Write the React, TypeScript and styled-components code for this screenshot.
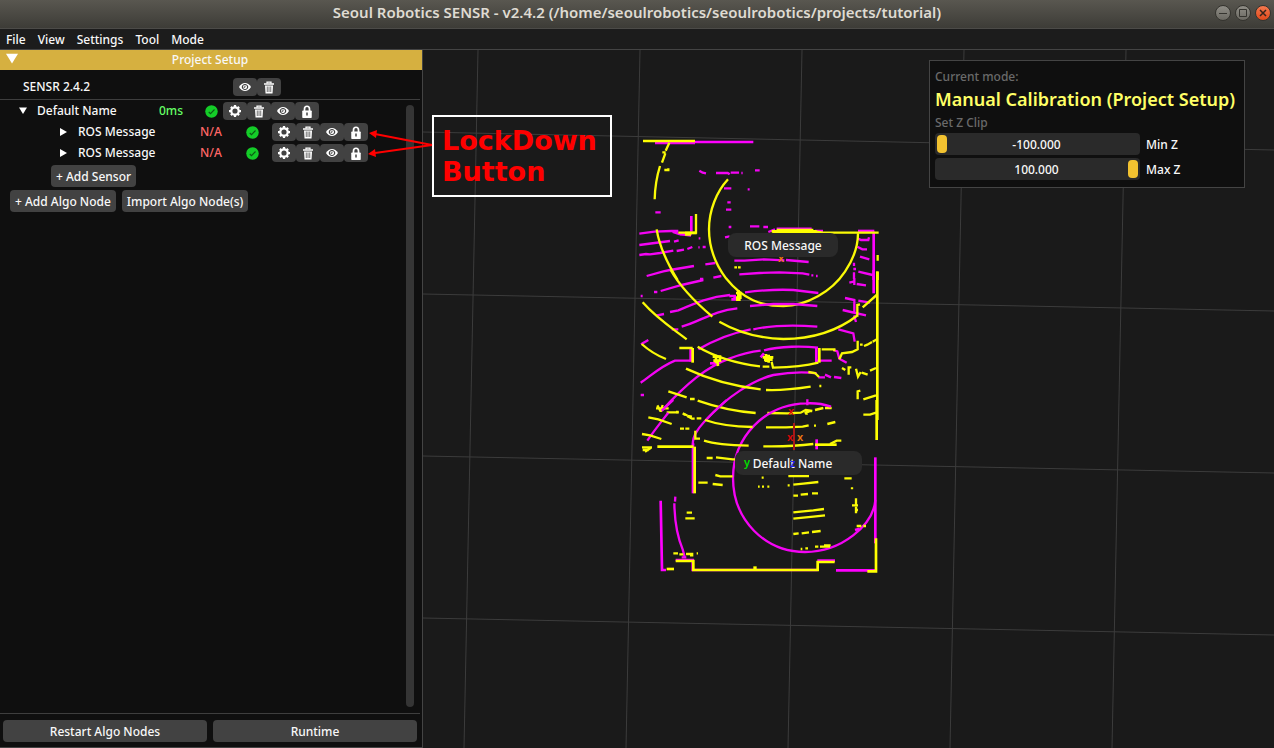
import React from "react";
import styled, { createGlobalStyle } from "styled-components";

const GlobalStyle = createGlobalStyle`
  *, *::before, *::after { box-sizing: border-box; }
  body {
    margin: 0;
    background: #1a1a1a;
    color: #f8f8f8;
    font: 460 12px/20px "Noto Sans", sans-serif;
  }
  button, input { font: inherit; color: inherit; }
`;

const Page = styled.div`
  display: flex;
  flex-direction: column;
  min-height: 100vh;
`;

const TitleBar = styled.header`
  display: grid;
  grid-template-columns: 80px 1fr 80px;
  align-items: center;
  height: 29px;
  padding-bottom: 2px;
  background: linear-gradient(#595750, #3d3c37);
  border-bottom: 1px solid #4c4b48;
`;

const WindowTitle = styled.h1`
  grid-column: 2;
  margin: 0;
  padding-bottom: 2px;
  text-align: center;
  white-space: nowrap;
  color: #dfdbd2;
  font: 600 15px/20px "Noto Sans", sans-serif;
`;

const WindowControls = styled.div`
  display: flex;
  justify-content: flex-end;
  gap: 4px;
  padding-right: 3px;
`;

const WindowButton = styled.button<{ $close?: boolean }>`
  display: grid;
  place-items: center;
  width: 16px;
  height: 16px;
  padding: 0;
  border: 1px solid #35342f;
  border-radius: 50%;
  background: ${(p) => (p.$close ? "linear-gradient(#f4794f, #e0491b)" : "linear-gradient(#8f8d86, #6b6962)")};
  svg { display: block; }
`;

const MenuBar = styled.nav`
  display: flex;
  gap: 12px;
  height: 21px;
  padding: 1px 0 0 6px;
  background: #1c1c1c;
  border-bottom: 1px solid #444;
`;

const MenuItem = styled.button`
  padding: 0;
  border: 0;
  background: none;
  line-height: 20px;
`;

const Workspace = styled.main`
  display: flex;
  flex: 1;
`;

const SidePanel = styled.aside`
  display: flex;
  flex-direction: column;
  flex: 0 0 423px;
  background: #0f0f0f;
  border-right: 1px solid #444;
  border-bottom: 1px solid #444;
`;

const PanelHeader = styled.header`
  display: grid;
  grid-template-columns: 24px 1fr 26px;
  height: 20px;
  background: #d6b040;
`;

const PanelTitle = styled.h2`
  margin: 0;
  font: inherit;
  text-align: center;
`;

const ToggleButton = styled.button`
  display: flex;
  align-items: center;
  padding: 0;
  border: 0;
  background: none;
`;

const HeaderToggle = styled(ToggleButton)`
  padding: 0 0 2px 6px;
`;

const ProjectRow = styled.div`
  display: grid;
  grid-template-columns: 210px auto;
  justify-content: start;
  align-items: center;
  margin: 8px 2px 1px 0;
  padding: 0 0 2px 23px;
  line-height: 18px;
`;

const Divider = styled.hr`
  width: 420px;
  height: 1px;
  margin: 0;
  border: 0;
  background: #3e3e3e;
`;

const TreeArea = styled.div`
  display: flex;
  flex: 1;
  justify-content: space-between;
  padding: 2px 8px 6px 0;
`;

const Tree = styled.div`
  display: flex;
  flex-direction: column;
  align-items: flex-start;
  gap: 3px;
`;

const TreeRow = styled.div<{ $child?: boolean }>`
  display: grid;
  grid-template-columns: 18px 122px 46px ${(p) => (p.$child ? "26px" : "18px")} auto;
  align-items: center;
  height: 18px;
  padding-left: ${(p) => (p.$child ? 60 : 19)}px;
  line-height: 18px;
`;

const Timing = styled.span<{ $ok?: boolean }>`
  color: ${(p) => (p.$ok ? "#66ff66" : "#ff6666")};
`;

const IconGroup = styled.div`
  display: flex;
`;

const IconButton = styled.button`
  display: grid;
  place-items: center;
  width: 24px;
  height: 18px;
  padding: 0;
  border: 0;
  border-radius: 4px;
  background: #424242;
  svg { display: block; }
`;

const ActionButton = styled.button`
  height: 22px;
  padding: 1px 5px 0;
  border: 0;
  border-radius: 4px;
  background: #424242;
  white-space: nowrap;
`;

const SensorActions = styled.div`
  padding-left: 51px;
`;

const NodeActions = styled.div`
  display: flex;
  gap: 6px;
  padding-left: 10px;
`;

const ScrollTrack = styled.div`
  width: 8px;
  margin-top: 3px;
  border-radius: 4px;
  background: #353535;
`;

const PanelFooter = styled.footer`
  display: grid;
  grid-template-columns: 1fr 1fr;
  gap: 6px;
  padding: 6px 5px 5px 3px;
`;

const Viewport = styled.section`
  position: relative;
  flex: 1;
  min-width: 0;
  background: #1a1a1a;
`;

const SceneCanvas = styled.svg`
  position: absolute;
  inset: 0;
  width: 100%;
  height: 100%;
`;

const SceneTag = styled.div<{ $x: number; $y: number; $w: number }>`
  position: absolute;
  left: ${(p) => p.$x}px;
  top: ${(p) => p.$y}px;
  width: ${(p) => p.$w}px;
  height: 24px;
  border-radius: 8px;
  background: #2a2a2a;
  line-height: 25px;
  text-align: center;
`;

const TagText = styled.span<{ $shift?: number }>`
  padding-right: ${(p) => p.$shift ?? 0}px;
`;

const Callout = styled.div`
  position: absolute;
  left: 9px;
  top: 65px;
  width: 180px;
  height: 82px;
  padding: 8px;
  border: 2px solid #fff;
  color: #f00;
  font: 700 27px/31px "DejaVu Sans", sans-serif;
`;

const CalloutArrows = styled.svg`
  position: absolute;
  left: -56px;
  top: 76px;
  overflow: visible;
  pointer-events: none;
`;

const ModePanel = styled.section`
  position: absolute;
  top: 10px;
  right: 29px;
  width: 316px;
  padding: 6px 5px 7px;
  background: #0f0f0f;
  border: 1px solid #444;
`;

const Caption = styled.p`
  margin: 0;
  color: #6a6a6a;
  line-height: 20px;
`;

const ModeName = styled.h2`
  margin: 0;
  padding-bottom: 2px;
  color: #ffff66;
  font: 650 18px/24px "Noto Sans", sans-serif;
  white-space: nowrap;
`;

const SliderRow = styled.div`
  display: grid;
  grid-template-columns: 205px auto;
  gap: 6px;
  align-items: center;
  margin-bottom: 3px;
  line-height: 22px;
  &:last-child { margin-bottom: 0; }
`;

const SliderBox = styled.div`
  display: grid;
  height: 22px;
  border-radius: 4px;
  background: #2a2a2a;
`;

const SliderLabel = styled.label`
  padding-top: 1px;
  line-height: 21px;
`;

const RangeInput = styled.input`
  grid-area: 1 / 1;
  appearance: none;
  width: 100%;
  height: 22px;
  margin: 0;
  padding: 0 2px;
  background: transparent;
  &::-webkit-slider-thumb {
    appearance: none;
    width: 10px;
    height: 18px;
    border-radius: 4px;
    background: #f2c230;
  }
`;

const SliderValue = styled.output`
  grid-area: 1 / 1;
  padding: 1px 2px 0 0;
  line-height: 22px;
  text-align: center;
  pointer-events: none;
`;

const Triangle = ({ open, size = 8 }: { open?: boolean; size?: number }) => (
  <svg width={size} height={size} viewBox="0 0 8 8" fill="#fff" aria-hidden="true">
    <path d={open ? "M0 .500H8L4 7Z" : "M0 0L7 4L0 8Z"} />
  </svg>
);

const GearIcon = () => (
  <svg width="12" height="12" viewBox="0 0 24 24" aria-hidden="true">
    <circle cx="12" cy="12" r="7.400" fill="none" stroke="#fff" strokeWidth="4.400" />
    <path
      d="M12 0V5M12 19V24M0 12H5M19 12H24M3.800 3.800L7 7M17 17L20.200 20.200M20.200 3.800L17 7M7 17L3.800 20.200"
      stroke="#fff"
      strokeWidth="4.500"
    />
  </svg>
);

const TrashIcon = () => (
  <svg width="12" height="13" viewBox="0 0 24 26" fill="none" stroke="#fff" aria-hidden="true">
    <path d="M2 6H22" strokeWidth="3" />
    <path d="M8 5V2H16V5" strokeWidth="2.500" />
    <path d="M4 9H20L19 25H5Z" fill="#fff" stroke="none" />
    <path d="M8.500 11V22M12 11V22M15.500 11V22" stroke="#424242" strokeWidth="1.500" />
  </svg>
);

const EyeIcon = () => (
  <svg width="12" height="10" viewBox="0 0 24 20" aria-hidden="true">
    <path d="M0 10C6 -.500 18 -.500 24 10C18 20.500 6 20.500 0 10Z" fill="#fff" />
    <circle cx="12" cy="10" r="5.200" fill="#fff" stroke="#424242" strokeWidth="2" />
    <path d="M12 7V10.500H9" fill="none" stroke="#424242" strokeWidth="1.800" />
    <path d="M5 10L8 6V14ZM19 10L16 6V14Z" fill="#424242" />
  </svg>
);

const LockIcon = () => (
  <svg width="12" height="13" viewBox="0 0 24 26" aria-hidden="true">
    <path d="M7 13V8A5 5.500 0 0 1 17 8V13" fill="none" stroke="#fff" strokeWidth="3.400" />
    <rect x="2.500" y="11" width="19" height="15" rx="1.500" fill="#fff" />
    <path d="M12 15V21" stroke="#424242" strokeWidth="3" />
  </svg>
);

const CheckIcon = () => (
  <svg width="13" height="13" viewBox="0 0 26 26" role="img" aria-label="Connected">
    <circle cx="13" cy="13" r="12.500" fill="#14cc28" />
    <path d="M7.500 14L11 17.500L19 9" fill="none" stroke="#0b5c14" strokeWidth="2.200" />
  </svg>
);

const icons = { settings: GearIcon, delete: TrashIcon, visibility: EyeIcon, lock: LockIcon };
type IconName = keyof typeof icons;

const IconBar = ({ names, target }: { names: IconName[]; target: string }) => (
  <IconGroup>
    {names.map((name) => {
      const Icon = icons[name];
      return (
        <IconButton key={name} type="button" aria-label={`${target} ${name}`}>
          <Icon />
        </IconButton>
      );
    })}
  </IconGroup>
);

interface NodeRowProps { name: string; timing: string; ok?: boolean; child?: boolean }

const NodeRow = ({ name, timing, ok, child }: NodeRowProps) => (
  <TreeRow $child={child}>
    <ToggleButton type="button" aria-label={`Toggle ${name}`}><Triangle open={!child} /></ToggleButton>
    <span>{name}</span>
    <Timing $ok={ok}>{timing}</Timing>
    <CheckIcon />
    <IconBar target={name} names={["settings", "delete", "visibility", "lock"]} />
  </TreeRow>
);

const ZSlider = ({ id, label, value }: { id: string; label: string; value: number }) => (
  <SliderRow>
    <SliderBox>
      <RangeInput id={id} type="range" min={-100} max={100} step={0.001} defaultValue={value} />
      <SliderValue htmlFor={id}>{value.toFixed(3)}</SliderValue>
    </SliderBox>
    <SliderLabel htmlFor={id}>{label}</SliderLabel>
  </SliderRow>
);

/* Lidar returns, three bands from top to bottom, drawn at a third of a pixel per unit. */
const bands = [
  {
    y: 80,
    magenta: [
      "M208 122l10 6 10 2M258 129h35l6 4M302 128h25M334 129h4M375 121h14M282 175h22M353 178h6M292 217h10M288 239h16M296 291h8M285 322l14-3M360 289h28M400 291h14M76 247h16",
      "M28 311l45-6 52-2h20M128 306l20 6 35 5M28 345l92-12M132 335l14-4M28 375l20-3 12 1 30-4 40-7M140 363l22-4M172 357l15-6M205 352h4M218 351h9M206 325h5",
      "M50 438L100 424L120 420L192 408M226 403l30-4M210 447h10M250 443l24-5",
      "M313 392h30l60-4 60 3M468 390l68 6M328 433l60-4 60-2 70 3 20 4M544 436h6M558 438h5M415 306l20-8M440 296h105M555 303h24",
      "M683 325l10 5h22l2-8M682 350l15 8h14M690 380l28 8M672 398v10M670 417h8M672 427v20M685 425l43 10M75 39h120",
    ],
    magentaBold: ["M195 36H370", "M184 258V305", "M684 303H733", "M731 305V450", "M150 312H185"],
    yellow: [
      "M118 38L107 62M97 67h10M106 70L96 98M90 108C80 140 75 170 74 208M103 120h12v-5",
      "M80 298C88 350 115 405 143 450M294 148C260 185 237 240 237 298C237 355 258 405 288 445C340 510 395 528 460 528C530 528 605 485 645 425C670 388 684 355 684 310M198 252V308H145M165 314h18",
      "M428 308H746M545 303l30 4M313 412h8M324 412h8M743 375V392M743 425V450",
    ],
    yellowBold: ["M39 33H195", "M425 304H560", "M440 300H550", "M165 309H200"],
  },
  {
    y: 220,
    magenta: [
      "M92 63L155 45L220 30M72 66h10M345 67C400 60 450 58 490 60L565 69M120 126L145 121C200 97 240 80 300 75M78 137l24-5",
      "M360 108L430 102h60l72 6M125 178h20M155 170C210 155 250 122 322 115M370 178C430 165 500 165 562 170M205 238C250 212 310 188 362 178M32 78h6M33 223l22-13",
      "M32 338C60 320 90 290 135 272H182M95 422C170 340 230 290 300 265C340 250 365 245 392 242M402 241C450 228 520 228 564 233M560 272h45M610 240l12 4 6 22 22 12M32 375h10",
      "M228 450C290 380 370 330 430 315C470 308 520 305 560 310M565 322h20M585 314l18 8M612 321l22 3M532 388v18",
      "M658 38l15-4M673 25v20M680 42l28 4M645 84l28 6v42M685 92l35 6M638 120l25 6 45 10M672 136l6 20M625 178l45 12 4 25",
    ],
    magentaBold: ["M731 0V70", "M182 235V275", "M559 234V278", "M298 78h16v10h-10", "M240 280h22", "M392 262l10-12"],
    yellow: [
      "M122 0C150 50 200 100 247 140M38 97C80 145 120 170 170 208M35 222C55 240 85 258 108 267",
      "M268 155C320 185 390 205 460 207C540 207 620 185 684 135M682 140V105l8-2M698 112L740 75M148 234H188",
      "M203 230C250 258 320 280 390 289M398 290h20M425 275l4 18C480 292 530 287 565 278M575 238h38v6M628 268l8-18 30-4 17-8V212M690 224h8M702 228l10-4 14-8M728 215l14-8",
      "M168 296C240 330 320 350 392 358M408 360C470 362 510 355 542 350M535 306l20 3 12 12M568 348h6",
      "M115 364l55 18M180 387h14M203 392C260 412 320 425 377 429M412 429l60 1 40-2 15-8 20 3M524 430l18-8M530 434v-12M555 420l25-6M585 414h20",
      "M636 294l10 6M656 314v-22h8M678 296l6 24 8-14M695 308l18 6M720 302l18-8M683 388v-24l8-2M700 388l38-12M700 434h20l18-6",
      "M78 415h38M82 406l10 18M98 405l-6 20M110 427h36M158 430l8 4M172 438l14 2",
    ],
    yellowBold: [
      "M742 4V450", "M188 234V278", "M568 234V278", "M318 69h13v14h-9v6h10M325 60v28",
      "M248 260h22v12h-20M258 254v26M262 270l2 18", "M398 262h32M402 269h26M408 252v24M416 254v24",
    ],
  },
  {
    y: 350,
    magenta: [
      "M290 0C260 30 220 60 200 95C190 110 188 125 189 135M130 0L95 32M115 38C90 70 70 95 52 122",
      "M603 20C580 12 553 9 530 10C405 12 310 110 309 233C309 360 405 456 525 456C635 456 730 375 736 300M136 290L135 305M133 310C134 370 142 410 158 448L165 474M155 472h14",
    ],
    magentaBold: ["M92 302L96 510h12", "M189 130V280", "M137 480H188V510H563M562 482H615", "M618 511H736", "M736 172V430", "M560 118V148", "M675 390l14-4"],
    yellow: [
      "M55 52l30 6 40 14M138 36h8M160 42l12 4M172 48l14 8h8M200 55h14M225 60C270 76 320 80 368 81M408 82h60l50-2 18-4M552 77h6M592 72l24-6",
      "M150 86h12M166 86h12M196 92v24h14M36 102l24 4 34 11M222 122C260 134 310 136 356 137M400 139C450 140 510 137 550 132M600 132l20-10h14M36 142h30M45 155l18-12M38 150h18",
      "M230 174h18M258 172l50 6h8M256 225l15 4h37M205 248h28M248 252l30 3M384 260h5M396 260h6M412 260h6M395 233h6M475 228h62",
      "M490 254l30-3 45-5M473 256h6M490 287h14M512 284l22-2M546 280h18M490 337l60-6 32-4M490 356l60-6 35-4M490 402l16-2M515 400l22-3M546 396l26-3",
      "M512 447h5M526 445h8M555 440h10M570 440h30M582 436h20M643 235h22M666 262v6M678 295v20M666 316h18M678 320v20M680 330h4M680 378h14M700 378h8M170 338h16M166 355h28",
      "M130 460h14M148 463h12M168 462h22M200 460h4M180 466h10",
    ],
    yellowBold: ["M740 0V120", "M82 140H190", "M194 140V280", "M555 134H620", "M137 483H190V510H563V486H614", "M738 415V514H712", "M110 507H132", "M370 503h10"],
  },
];

const PointCloud = () => (
  <>
    {bands.map((band) => (
      <g key={band.y} transform={`translate(207 ${band.y}) scale(0.333333)`} fill="none">
        <g stroke="#f404f4" strokeWidth="7">
          {band.magenta.map((d) => <path key={d} d={d} />)}
        </g>
        <g stroke="#ff00ff" strokeWidth="8">
          {band.magentaBold.map((d) => <path key={d} d={d} />)}
        </g>
        <g stroke="#fafa06" strokeWidth="7">
          {band.yellow.map((d) => <path key={d} d={d} />)}
        </g>
        <g stroke="#ffff00" strokeWidth="8">
          {band.yellowBold.map((d) => <path key={d} d={d} />)}
        </g>
      </g>
    ))}
  </>
);

const gridLines = [
  "M55 0L41 698", "M217 0L203 698", "M379 0L365 698", "M541 0L527 698", "M703 0L689 698",
  "M0 82L851 100", "M0 244L851 261", "M0 406L851 423", "M0 568L851 585",
];

const axisMarks = [
  { text: "x", x: 368, y: 365, fill: "#dd0808" },
  { text: "x", x: 367, y: 391, fill: "#dd0808" },
  { text: "x", x: 377, y: 391, fill: "#ee7711" },
  { text: "x", x: 358, y: 212, fill: "#ee7711" },
];

const App = () => (
  <Page>
    <GlobalStyle />
    <TitleBar>
      <WindowTitle>Seoul Robotics SENSR - v2.4.2 (/home/seoulrobotics/seoulrobotics/projects/tutorial)</WindowTitle>
      <WindowControls>
        <WindowButton type="button" aria-label="Minimize">
          <svg width="8" height="8" stroke="#35342f"><path d="M0 4.500H8" /></svg>
        </WindowButton>
        <WindowButton type="button" aria-label="Maximize">
          <svg width="8" height="8" stroke="#35342f" fill="none"><path d="M.500 .500H7.500V7.500H.500Z" /></svg>
        </WindowButton>
        <WindowButton type="button" aria-label="Close" $close>
          <svg width="8" height="8" stroke="#35241c" strokeWidth="1.500"><path d="M1 1L7 7M7 1L1 7" /></svg>
        </WindowButton>
      </WindowControls>
    </TitleBar>
    <MenuBar>
      {["File", "View", "Settings", "Tool", "Mode"].map((item) => (
        <MenuItem key={item} type="button">{item}</MenuItem>
      ))}
    </MenuBar>
    <Workspace>
      <SidePanel>
        <PanelHeader>
          <HeaderToggle type="button" aria-label="Collapse panel"><Triangle open size={12} /></HeaderToggle>
          <PanelTitle>Project Setup</PanelTitle>
        </PanelHeader>
        <ProjectRow>
          <span>SENSR 2.4.2</span>
          <IconBar target="Project" names={["visibility", "delete"]} />
        </ProjectRow>
        <Divider />
        <TreeArea>
          <Tree>
            <NodeRow name="Default Name" timing="0ms" ok />
            <NodeRow name="ROS Message" timing="N/A" child />
            <NodeRow name="ROS Message" timing="N/A" child />
            <SensorActions><ActionButton type="button">+ Add Sensor</ActionButton></SensorActions>
            <NodeActions>
              <ActionButton type="button">+ Add Algo Node</ActionButton>
              <ActionButton type="button">Import Algo Node(s)</ActionButton>
            </NodeActions>
          </Tree>
          <ScrollTrack />
        </TreeArea>
        <Divider />
        <PanelFooter>
          <ActionButton type="button">Restart Algo Nodes</ActionButton>
          <ActionButton type="button">Runtime</ActionButton>
        </PanelFooter>
      </SidePanel>
      <Viewport>
        <SceneCanvas aria-label="Point cloud">
          <g stroke="#3c3c3c" strokeWidth="1">
            {gridLines.map((d) => <path key={d} d={d} />)}
          </g>
          <PointCloud />
          <path d="M371 373V400" stroke="#a81818" strokeWidth="2" />
          <g fontSize="11" fontWeight="600" textAnchor="middle">
            {axisMarks.map((m) => (
              <text key={`${m.x}-${m.y}`} x={m.x} y={m.y} fill={m.fill}>{m.text}</text>
            ))}
          </g>
        </SceneCanvas>
        <SceneTag $x={305} $y={183} $w={110}><TagText>ROS Message</TagText></SceneTag>
        <SceneTag $x={312} $y={401} $w={127}><TagText $shift={12}>Default Name</TagText></SceneTag>
        <SceneCanvas aria-label="Axis letters">
          <g fontSize="11" fontWeight="600" textAnchor="middle">
            <text x="324" y="416" fill="#00dd00">y</text>
            <text x="370" y="417" fill="#2222ee">z</text>
          </g>
        </SceneCanvas>
        <Callout>LockDown Button</Callout>
        <CalloutArrows width="66" height="32" aria-hidden="true">
          <path d="M65 19L8 8M65 19L8 27" stroke="#f00" strokeWidth="2" />
          <path d="M2 7L10 4L9 12ZM1 28L8 23L9 31Z" fill="#f00" />
        </CalloutArrows>
        <ModePanel>
          <Caption>Current mode:</Caption>
          <ModeName>Manual Calibration (Project Setup)</ModeName>
          <Caption>Set Z Clip</Caption>
          <ZSlider id="min-z" label="Min Z" value={-100} />
          <ZSlider id="max-z" label="Max Z" value={100} />
        </ModePanel>
      </Viewport>
    </Workspace>
  </Page>
);

export default App;
